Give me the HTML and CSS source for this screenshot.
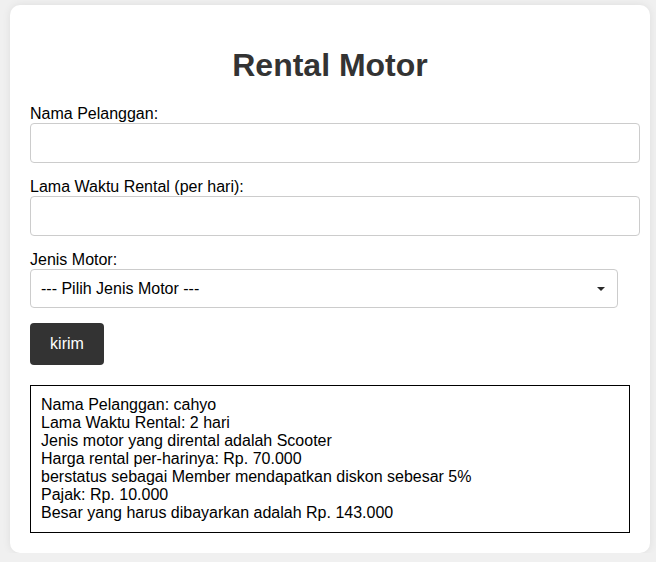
FILE: index.html
```html
<!DOCTYPE html>
<html lang="id">
<head>
<meta charset="utf-8">
<title>Rental Motor</title>
<link rel="stylesheet" href="styles.css">
</head>
<body>
<div class="card">
  <h1 class="title">Rental Motor</h1>
  <form class="form">
    <label class="label" for="nama">Nama Pelanggan:</label>
    <input class="field" type="text" id="nama">
    <label class="label" for="lama">Lama Waktu Rental (per hari):</label>
    <input class="field" type="text" id="lama">
    <label class="label" for="jenis">Jenis Motor:</label>
    <div class="select-wrap">
      <select class="select" id="jenis">
        <option>--- Pilih Jenis Motor ---</option>
      </select>
      <svg class="arrow" width="8" height="4" viewBox="0 0 8 4"><path d="M0 0H8L4 4Z" fill="#2a2a2a"/></svg>
    </div>
    <button class="btn" type="button">kirim</button>
  </form>
  <div class="result">
    Nama Pelanggan: cahyo<br>
    Lama Waktu Rental: 2 hari<br>
    Jenis motor yang dirental adalah Scooter<br>
    Harga rental per-harinya: Rp. 70.000<br>
    berstatus sebagai Member mendapatkan diskon sebesar 5%<br>
    Pajak: Rp. 10.000<br>
    Besar yang harus dibayarkan adalah Rp. 143.000
  </div>
</div>
</body>
</html>
```

FILE: styles.css
```css
html, body {
  margin: 0;
  background: #f0f0f0;
}
body {
  padding: 5px 0 0 10px;
  font-family: "Liberation Sans", Arial, sans-serif;
  font-size: 16px;
  color: #000;
}
.card {
  width: 600px;
  padding: 20px;
  background: #fff;
  border-radius: 10px;
  box-shadow: 0 0 8px rgba(0, 0, 0, 0.08);
}
.title {
  text-align: center;
  color: #333;
  font-size: 32px;
  font-weight: bold;
  margin: 21.5px 0 21.5px;
  line-height: 37px;
}
.form {
  display: flex;
  flex-direction: column;
  align-items: flex-start;
}
.label {
  display: block;
  line-height: 18px;
}
.field {
  box-sizing: border-box;
  width: calc(100% + 10px);
  height: 40px;
  padding: 10px;
  border: 1px solid #ccc;
  border-radius: 4px;
  font: inherit;
  margin: 0 0 15px;
}
.select-wrap {
  position: relative;
  width: 588px;
  margin: 0 0 15px;
}
.select {
  display: block;
  box-sizing: border-box;
  -webkit-appearance: none;
  appearance: none;
  width: 100%;
  height: 39px;
  padding: 0 10px;
  border: 1px solid #ccc;
  border-radius: 4px;
  background: #fff;
  font: inherit;
  color: #000;
  margin: 0;
}
.arrow {
  position: absolute;
  right: 13px;
  top: 18px;
  pointer-events: none;
}
.btn {
  width: 74px;
  height: 42px;
  padding: 0;
  border: none;
  border-radius: 4px;
  background: #333;
  color: #fff;
  font: inherit;
  margin: 0 0 20px;
}
.result {
  border: 1px solid #000;
  padding: 10px;
  line-height: 18px;
}
```
